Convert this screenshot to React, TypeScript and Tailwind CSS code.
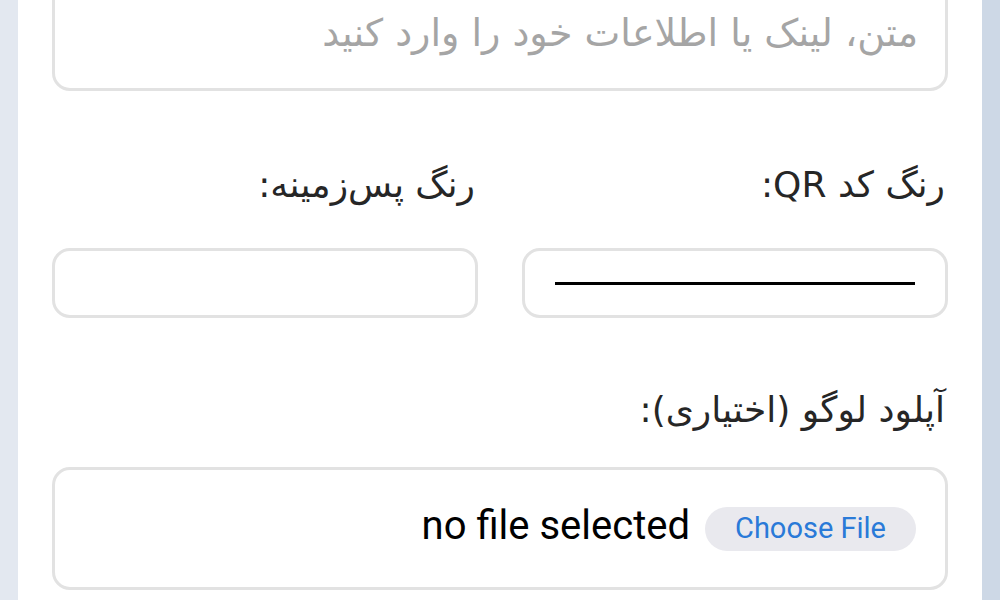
import React from "react";

const fa = { fontFamily: '"DejaVu Sans", "Noto Sans", sans-serif' };
const latin = { fontFamily: 'Roboto, "Liberation Sans", sans-serif' };

function Label({ children }: { children: React.ReactNode }) {
  return (
    <div className="pr-[3px] text-[36px] leading-[48px] text-[#262626]" style={fa}>
      {children}
    </div>
  );
}

function ColorField({ swatch }: { swatch: string }) {
  return (
    <div className="flex h-[70px] items-center rounded-[18px] border-[3px] border-[#e2e2e2] bg-white px-[30px]">
      <div className={`h-[3px] w-full ${swatch}`} />
    </div>
  );
}

export default function App() {
  return (
    <div dir="rtl" className="flex h-[600px] w-full overflow-hidden bg-white">
      <div className="w-[18px] shrink-0 bg-[#cdd8e6]" />
      <div className="flex-1 bg-white px-[34px]">
        <div className="-mt-[40px] h-[131px] rounded-[18px] border-[3px] border-[#e2e2e2] bg-white pr-[27px] pt-[45px]">
          <div className="text-[38px] leading-[50px] text-[#a5a5a5]" style={fa}>
            متن، لینک یا اطلاعات خود را وارد کنید
          </div>
        </div>

        <div className="mt-[70px] grid grid-cols-2 gap-x-[44px]">
          <div>
            <Label>رنگ کد QR:</Label>
            <div className="mt-[39px]">
              <ColorField swatch="bg-black" />
            </div>
          </div>
          <div>
            <Label>رنگ پس‌زمینه:</Label>
            <div className="mt-[39px]">
              <ColorField swatch="bg-white" />
            </div>
          </div>
        </div>

        <div className="mt-[68px]">
          <Label>آپلود لوگو (اختیاری):</Label>
        </div>
        <div className="mt-[33px] flex h-[123px] items-center gap-[15px] rounded-[18px] border-[3px] border-[#e2e2e2] bg-white pr-[29px]">
          <div
            className="flex h-[44px] w-[211px] items-center justify-center rounded-full bg-[#e9e9ee] text-[29px] text-[#2a7ad8]"
            style={latin}
          >
            Choose File
          </div>
          <div className="-mt-[6px] text-[40px] text-black" style={latin}>
            no file selected
          </div>
        </div>
      </div>
      <div className="w-[18px] shrink-0 bg-[#e3e8f0]" />
    </div>
  );
}
